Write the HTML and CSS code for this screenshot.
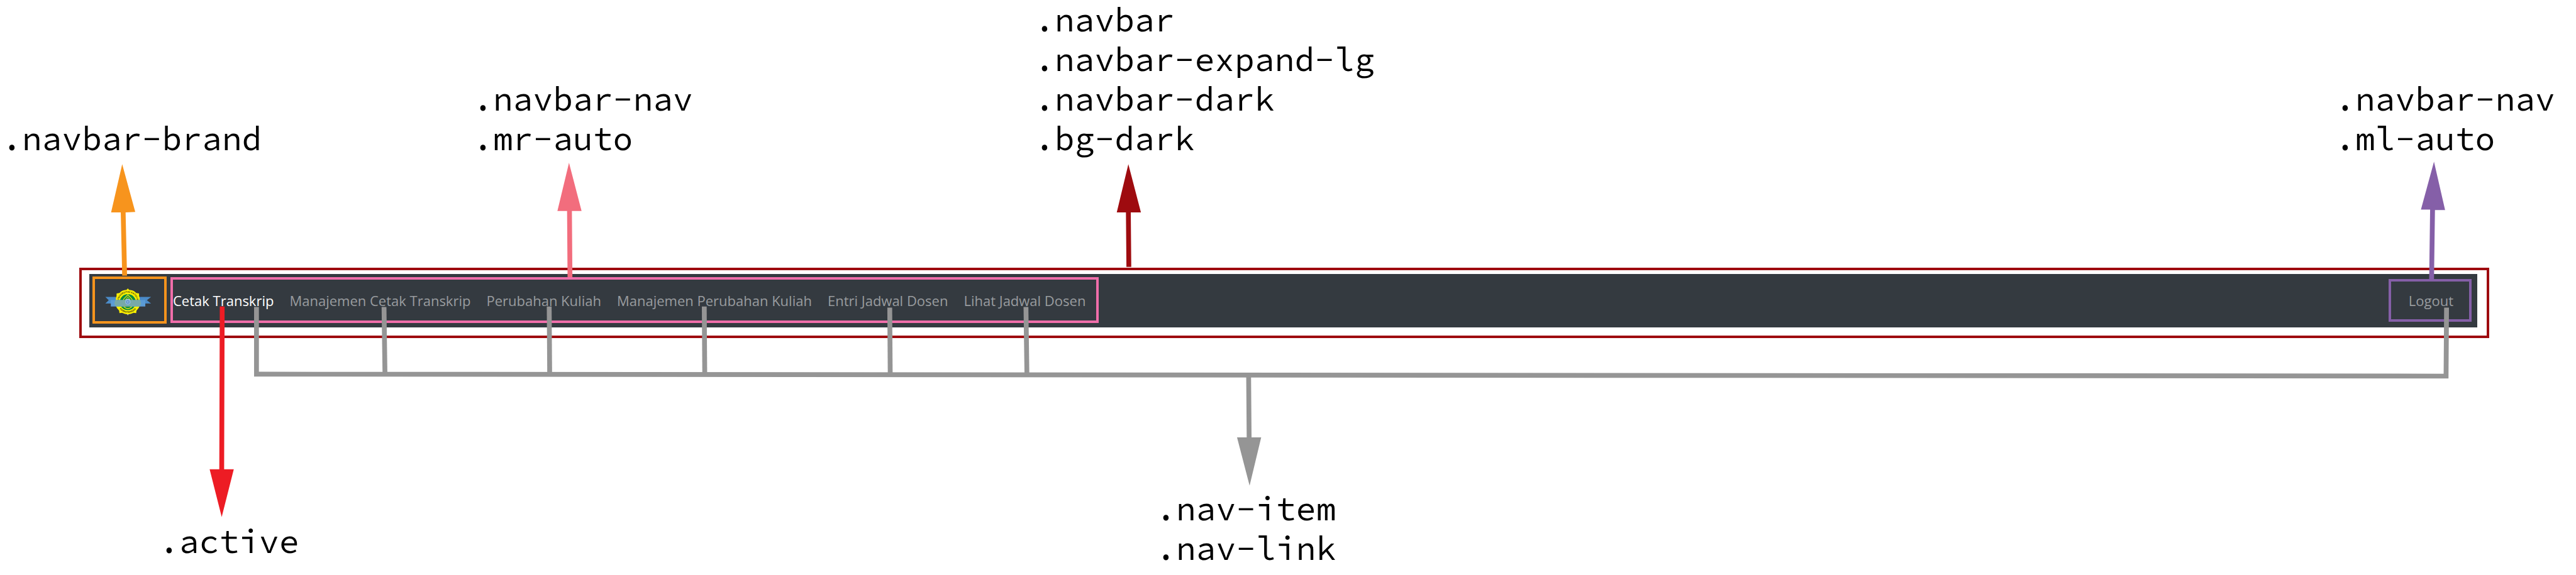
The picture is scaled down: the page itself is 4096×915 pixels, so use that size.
FILE: index.html
```html
<!DOCTYPE html>
<html lang="id">
<head>
<meta charset="utf-8">
<meta name="viewport" content="width=device-width, initial-scale=1">
<title>Navbar classes</title>
<link rel="stylesheet" href="styles.css">
</head>
<body>
<main class="diagram">
  <div class="labels labels-top">
    <code class="label">.navbar-brand</code>
    <code class="label">.navbar-nav<br>.mr-auto</code>
    <code class="label">.navbar<br>.navbar-expand-lg<br>.navbar-dark<br>.bg-dark</code>
    <code class="label">.navbar-nav<br>.ml-auto</code>
  </div>

  <div class="frame">
    <nav class="navbar" aria-label="Menu utama">
      <a class="navbar-brand" href="#" aria-label="Beranda">
        <svg class="logo" viewBox="110 112 290 168" aria-hidden="true">
          <defs>
            <path id="arc-top" d="M194 196A58 58 0 0 1 310 196"/>
            <path id="arc-bottom" d="M184 196A68 68 0 0 0 320 196"/>
          </defs>
          <path fill="#fff200" d="M252 112L260 121Q287 122 304 140L322 143L322 160Q333 177 332 196L337 206L327 218Q322 237 306 250L304 266L288 264Q270 273 252 273Q234 273 216 264L200 266L198 250Q182 237 177 218L167 206L172 196Q171 177 182 160L182 143L200 140Q217 122 244 121Z"/>
          <circle cx="252" cy="197" r="50" fill="#078a3e"/>
          <path fill="none" stroke="#e5df18" stroke-width="5" d="M252 151L276 176Q292 200 276 226Q252 248 228 226Q212 200 228 176Z"/>
          <path fill="none" stroke="#b5cc27" stroke-width="4" d="M252 164L268 184H236ZM229 229Q252 212 275 229"/>
          <circle cx="252" cy="197" r="21" fill="#d5dde0"/>
          <circle cx="252" cy="197" r="12" fill="none" stroke="#6f8fae" stroke-width="4"/>
          <text class="logo-text"><textPath href="#arc-top" startOffset="50%" text-anchor="middle">UNIVERSITAS KATOLIK</textPath></text>
          <text class="logo-text"><textPath href="#arc-bottom" startOffset="50%" text-anchor="middle">PARAHYANGAN</textPath></text>
          <path fill="#4b8bc8" d="M112 165H178V206H112L133 185ZM397 165H326V206H397L371 185Z"/>
          <path fill="#5b9bd5" d="M146 184H361V224H146Z"/>
          <path fill="#78a9a8" d="M174 184H331V193L335 206L327 224H177L168 206Z"/>
          <circle cx="252" cy="196" r="17" fill="#8eb7df"/>
          <circle cx="252" cy="196" r="8" fill="none" stroke="#5d91c6" stroke-width="5"/>
          <path fill="#c5c8cb" d="M246 273H258L252 279Z"/>
        </svg>
      </a>
      <ul class="navbar-nav navbar-nav-main">
        <li><a class="nav-link active" href="#" aria-current="page">Cetak Transkrip</a></li>
        <li><a class="nav-link" href="#">Manajemen Cetak Transkrip</a></li>
        <li><a class="nav-link" href="#">Perubahan Kuliah</a></li>
        <li><a class="nav-link" href="#">Manajemen Perubahan Kuliah</a></li>
        <li><a class="nav-link" href="#">Entri Jadwal Dosen</a></li>
        <li><a class="nav-link" href="#">Lihat Jadwal Dosen</a></li>
      </ul>
      <ul class="navbar-nav navbar-nav-end">
        <li><a class="nav-link" href="#">Logout</a></li>
      </ul>
    </nav>
  </div>

  <div class="labels labels-bottom">
    <code class="label label-active">.active</code>
    <code class="label">.nav-item<br>.nav-link</code>
  </div>

  <svg class="arrows" viewBox="0 0 5333 1191" preserveAspectRatio="none" aria-hidden="true">
    <path fill="#f7941d" d="M253 340L280 439L260 440L263 571H253L250 440H230Z"/>
    <path fill="#f26d7d" d="M1178 337L1204 437H1184L1185 574H1175L1174 437H1154Z"/>
    <path fill="#9e0b0f" d="M2336 340L2362 440H2341L2342 553H2332L2331 440H2312Z"/>
    <path fill="#855fa8" d="M5039 335L5062 435H5041L5039 580H5029L5031 434H5012Z"/>
    <g fill="#959595">
      <path d="M526 636H536V770L5059 774L5060 637H5070L5069 784L526 780Z"/>
      <path d="M790 636H800L802 775H792Z"/>
      <path d="M1132 635H1142L1143 775H1133Z"/>
      <path d="M1453 635H1463L1464 775H1454Z"/>
      <path d="M1837 637H1847L1848 776H1838Z"/>
      <path d="M2119 636H2129L2131 776H2121Z"/>
      <path d="M2580 780H2590L2591 906H2611L2587 1006L2561 906H2581Z"/>
    </g>
    <path fill="#ed1c24" d="M455 635H465L464 972H484L459 1071L434 972H454Z"/>
  </svg>
</main>
</body>
</html>
```
FILE: styles.css
```css
* {
  box-sizing: border-box;
}

body {
  margin: 0;
  background: #fff;
  color: #000;
}

.diagram {
  position: relative;
  min-height: 100vh;
}

.labels {
  display: grid;
}

.labels-top {
  grid-template-columns: 749fr 893fr 2068fr 383fr;
  align-items: end;
  padding-left: 3px;
  margin-bottom: 174px;
}

.labels-bottom {
  grid-template-columns: 1585fr 2258fr;
  align-items: start;
  padding-left: 253px;
  margin-top: 240px;
}

.label {
  font-family: "Source Code Pro", "DejaVu Sans Mono", monospace;
  font-size: 53px;
  line-height: 63px;
  white-space: nowrap;
}

.label-active {
  padding-top: 52px;
}

.frame {
  margin: 0 138px 0 126px;
  padding: 6px 15px 13px 12px;
  border: 4px solid #9e0b0f;
}

.navbar {
  display: flex;
  align-items: center;
  gap: 6px;
  padding: 4px 9px 6px 5px;
  background: #343a40;
  font-family: "Open Sans", "Noto Sans", sans-serif;
  font-size: 22px;
  line-height: 25px;
}

.navbar-brand {
  display: flex;
  padding: 15px 20px 9px 16px;
  border: 4px solid #f7941d;
}

.logo {
  width: 74px;
  height: 43px;
}

.logo-text {
  font: bold 15px "Open Sans", sans-serif;
  fill: #4a4a10;
}

.navbar-nav {
  display: flex;
  gap: 25px;
  margin: 0;
  list-style: none;
  white-space: nowrap;
}

.navbar-nav-main {
  margin-right: auto;
  padding: 21px 17px 19px 0;
  border: 4px solid #f06eaa;
}

.navbar-nav-end {
  padding: 18px 25px 17px 28px;
  border: 4px solid #855fa8;
}

.nav-link {
  display: block;
  color: #999c9f;
  text-decoration: none;
}

.nav-link.active {
  color: #fff;
}

.arrows {
  position: absolute;
  inset: 0;
  width: 100%;
  height: 100%;
  pointer-events: none;
}
```
